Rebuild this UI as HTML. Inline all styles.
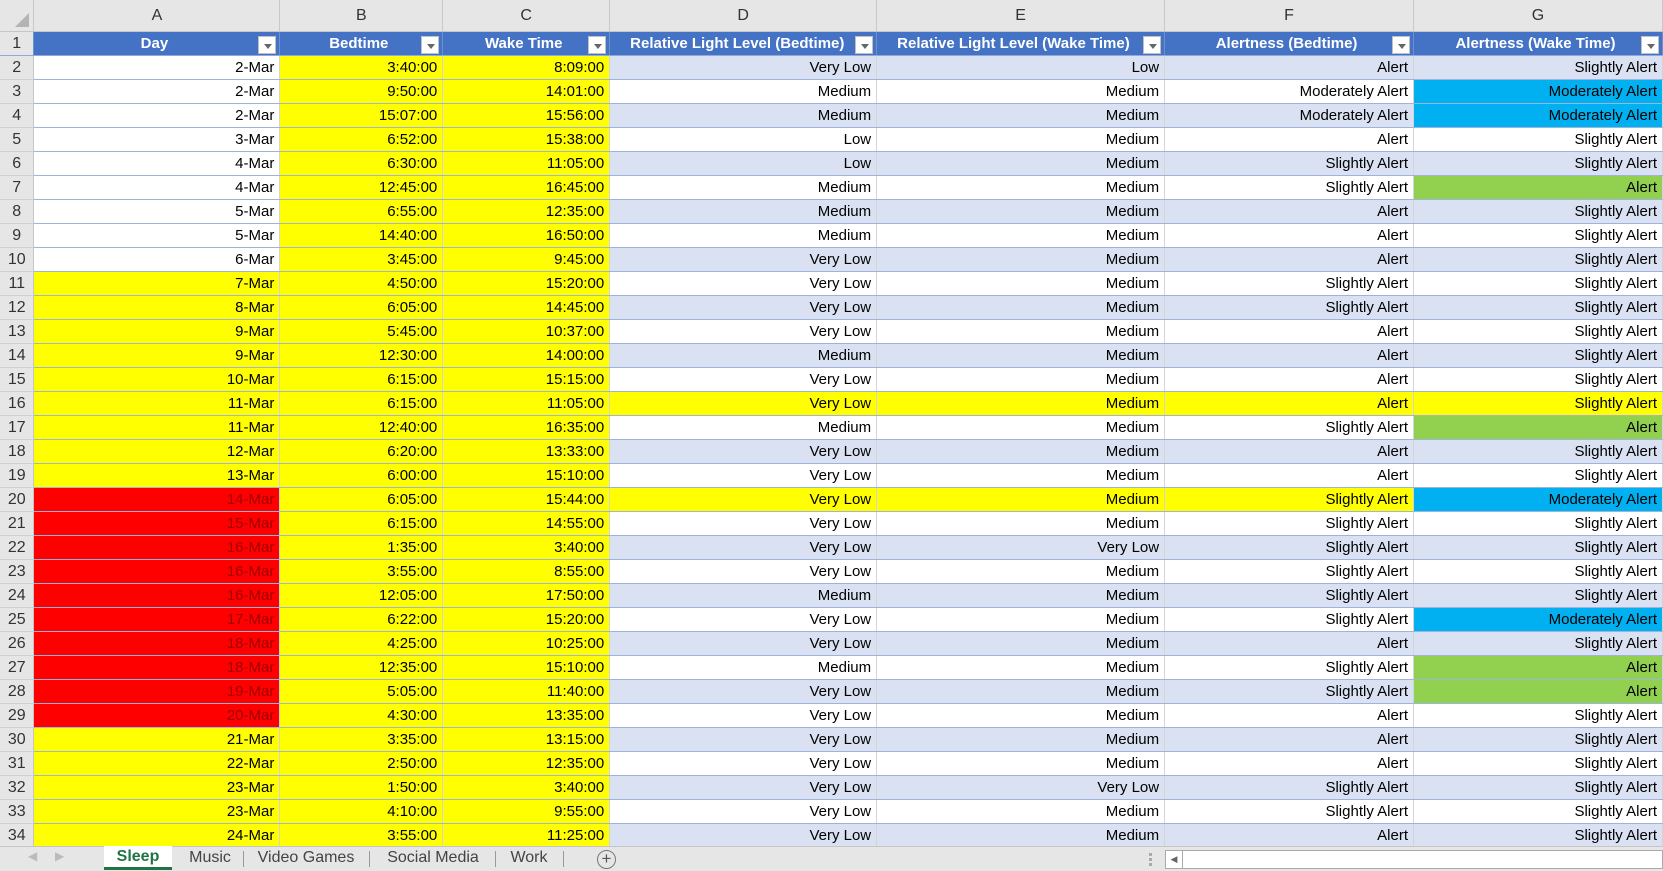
<!DOCTYPE html>
<html><head><meta charset="utf-8"><style>
*{margin:0;padding:0;box-sizing:border-box}
body{width:1663px;height:871px;overflow:hidden;background:#fff;font-family:"Liberation Sans",sans-serif;font-size:15px;color:#000;position:relative}
table{border-collapse:collapse;table-layout:fixed;position:absolute;left:0;top:0}
td{height:24px;padding:0 5px 0 0;text-align:right;white-space:nowrap;overflow:hidden;border-bottom:1px solid #9fb4d8;border-right:1px solid #d4d4d4;line-height:23px}
tr.ch td{height:31px;background:#e6e6e6;text-align:center;color:#333;font-size:16px;border-bottom:1px solid #c6c6c6;border-right:1px solid #c8c8c8;padding:0}
tr.h td{background:#4472c4;color:#fff;font-weight:bold;text-align:center;position:relative;border-right:1px solid #6f8fd0;border-bottom:1px solid #8ea9db}
tr.h td.rn{font-weight:normal}
td.rn{background:#e6e6e6!important;color:#333!important;text-align:center;padding:0;font-size:16px;border-right:1px solid #c6c6c6;border-bottom:1px solid #d0d0d0}
tr.b td{background:#d9e1f2}
td.y,tr.b td.y{background:#ffff00}
td.r,tr.b td.r{background:#ff0000;color:#a00000}
td.bl,tr.b td.bl{background:#00b0f0}
td.g,tr.b td.g{background:#92d050}
td.w,tr.b td.w{background:#fff}
.dd{position:absolute;right:3px;top:4px;width:18px;height:18px;background:#fff;border:1px solid #c0c0c0}
.dd:after{content:"";position:absolute;left:5px;top:7px;border-left:4px solid transparent;border-right:4px solid transparent;border-top:5px solid #666}
.bar{position:absolute;left:0;top:846px;width:1663px;height:25px;background:#e6e6e6;border-top:1px solid #c6c6c6;font-size:16px;color:#444}
.tab{position:absolute;top:0;height:24px;line-height:22px;text-align:center}
.sep{position:absolute;top:4px;width:1px;height:16px;background:#999}
</style></head><body>
<table>
<colgroup><col style="width:34px"><col style="width:246px"><col style="width:163px"><col style="width:167px"><col style="width:267px"><col style="width:288px"><col style="width:249px"><col style="width:249px"></colgroup>
<tr class="ch" style="height:31px"><td style="position:relative"><div style="position:absolute;right:4px;bottom:4px;border-left:14px solid transparent;border-bottom:14px solid #b4b4b4;width:0;height:0"></div></td><td>A</td><td>B</td><td>C</td><td>D</td><td>E</td><td>F</td><td>G</td></tr>
<tr class="h"><td class="rn">1</td><td>Day<span class="dd"></span></td><td>Bedtime<span class="dd"></span></td><td>Wake Time<span class="dd"></span></td><td style="text-align:left;padding-left:20px">Relative Light Level (Bedtime)<span class="dd"></span></td><td style="text-align:left;padding-left:20px">Relative Light Level (Wake Time)<span class="dd"></span></td><td>Alertness (Bedtime)<span class="dd"></span></td><td>Alertness (Wake Time)<span class="dd"></span></td></tr>
<tr class="b"><td class="rn">2</td><td class="w">2-Mar</td><td class="y">3:40:00</td><td class="y">8:09:00</td><td>Very Low</td><td>Low</td><td>Alert</td><td>Slightly Alert</td></tr>
<tr><td class="rn">3</td><td class="w">2-Mar</td><td class="y">9:50:00</td><td class="y">14:01:00</td><td>Medium</td><td>Medium</td><td>Moderately Alert</td><td class="bl">Moderately Alert</td></tr>
<tr class="b"><td class="rn">4</td><td class="w">2-Mar</td><td class="y">15:07:00</td><td class="y">15:56:00</td><td>Medium</td><td>Medium</td><td>Moderately Alert</td><td class="bl">Moderately Alert</td></tr>
<tr><td class="rn">5</td><td class="w">3-Mar</td><td class="y">6:52:00</td><td class="y">15:38:00</td><td>Low</td><td>Medium</td><td>Alert</td><td>Slightly Alert</td></tr>
<tr class="b"><td class="rn">6</td><td class="w">4-Mar</td><td class="y">6:30:00</td><td class="y">11:05:00</td><td>Low</td><td>Medium</td><td>Slightly Alert</td><td>Slightly Alert</td></tr>
<tr><td class="rn">7</td><td class="w">4-Mar</td><td class="y">12:45:00</td><td class="y">16:45:00</td><td>Medium</td><td>Medium</td><td>Slightly Alert</td><td class="g">Alert</td></tr>
<tr class="b"><td class="rn">8</td><td class="w">5-Mar</td><td class="y">6:55:00</td><td class="y">12:35:00</td><td>Medium</td><td>Medium</td><td>Alert</td><td>Slightly Alert</td></tr>
<tr><td class="rn">9</td><td class="w">5-Mar</td><td class="y">14:40:00</td><td class="y">16:50:00</td><td>Medium</td><td>Medium</td><td>Alert</td><td>Slightly Alert</td></tr>
<tr class="b"><td class="rn">10</td><td class="w">6-Mar</td><td class="y">3:45:00</td><td class="y">9:45:00</td><td>Very Low</td><td>Medium</td><td>Alert</td><td>Slightly Alert</td></tr>
<tr><td class="rn">11</td><td class="y">7-Mar</td><td class="y">4:50:00</td><td class="y">15:20:00</td><td>Very Low</td><td>Medium</td><td>Slightly Alert</td><td>Slightly Alert</td></tr>
<tr class="b"><td class="rn">12</td><td class="y">8-Mar</td><td class="y">6:05:00</td><td class="y">14:45:00</td><td>Very Low</td><td>Medium</td><td>Slightly Alert</td><td>Slightly Alert</td></tr>
<tr><td class="rn">13</td><td class="y">9-Mar</td><td class="y">5:45:00</td><td class="y">10:37:00</td><td>Very Low</td><td>Medium</td><td>Alert</td><td>Slightly Alert</td></tr>
<tr class="b"><td class="rn">14</td><td class="y">9-Mar</td><td class="y">12:30:00</td><td class="y">14:00:00</td><td>Medium</td><td>Medium</td><td>Alert</td><td>Slightly Alert</td></tr>
<tr><td class="rn">15</td><td class="y">10-Mar</td><td class="y">6:15:00</td><td class="y">15:15:00</td><td>Very Low</td><td>Medium</td><td>Alert</td><td>Slightly Alert</td></tr>
<tr class="b"><td class="rn">16</td><td class="y">11-Mar</td><td class="y">6:15:00</td><td class="y">11:05:00</td><td class="y">Very Low</td><td class="y">Medium</td><td class="y">Alert</td><td class="y">Slightly Alert</td></tr>
<tr><td class="rn">17</td><td class="y">11-Mar</td><td class="y">12:40:00</td><td class="y">16:35:00</td><td>Medium</td><td>Medium</td><td>Slightly Alert</td><td class="g">Alert</td></tr>
<tr class="b"><td class="rn">18</td><td class="y">12-Mar</td><td class="y">6:20:00</td><td class="y">13:33:00</td><td>Very Low</td><td>Medium</td><td>Alert</td><td>Slightly Alert</td></tr>
<tr><td class="rn">19</td><td class="y">13-Mar</td><td class="y">6:00:00</td><td class="y">15:10:00</td><td>Very Low</td><td>Medium</td><td>Alert</td><td>Slightly Alert</td></tr>
<tr class="b"><td class="rn">20</td><td class="r">14-Mar</td><td class="y">6:05:00</td><td class="y">15:44:00</td><td class="y">Very Low</td><td class="y">Medium</td><td class="y">Slightly Alert</td><td class="bl">Moderately Alert</td></tr>
<tr><td class="rn">21</td><td class="r">15-Mar</td><td class="y">6:15:00</td><td class="y">14:55:00</td><td>Very Low</td><td>Medium</td><td>Slightly Alert</td><td>Slightly Alert</td></tr>
<tr class="b"><td class="rn">22</td><td class="r">16-Mar</td><td class="y">1:35:00</td><td class="y">3:40:00</td><td>Very Low</td><td>Very Low</td><td>Slightly Alert</td><td>Slightly Alert</td></tr>
<tr><td class="rn">23</td><td class="r">16-Mar</td><td class="y">3:55:00</td><td class="y">8:55:00</td><td>Very Low</td><td>Medium</td><td>Slightly Alert</td><td>Slightly Alert</td></tr>
<tr class="b"><td class="rn">24</td><td class="r">16-Mar</td><td class="y">12:05:00</td><td class="y">17:50:00</td><td>Medium</td><td>Medium</td><td>Slightly Alert</td><td>Slightly Alert</td></tr>
<tr><td class="rn">25</td><td class="r">17-Mar</td><td class="y">6:22:00</td><td class="y">15:20:00</td><td>Very Low</td><td>Medium</td><td>Slightly Alert</td><td class="bl">Moderately Alert</td></tr>
<tr class="b"><td class="rn">26</td><td class="r">18-Mar</td><td class="y">4:25:00</td><td class="y">10:25:00</td><td>Very Low</td><td>Medium</td><td>Alert</td><td>Slightly Alert</td></tr>
<tr><td class="rn">27</td><td class="r">18-Mar</td><td class="y">12:35:00</td><td class="y">15:10:00</td><td>Medium</td><td>Medium</td><td>Slightly Alert</td><td class="g">Alert</td></tr>
<tr class="b"><td class="rn">28</td><td class="r">19-Mar</td><td class="y">5:05:00</td><td class="y">11:40:00</td><td>Very Low</td><td>Medium</td><td>Slightly Alert</td><td class="g">Alert</td></tr>
<tr><td class="rn">29</td><td class="r">20-Mar</td><td class="y">4:30:00</td><td class="y">13:35:00</td><td>Very Low</td><td>Medium</td><td>Alert</td><td>Slightly Alert</td></tr>
<tr class="b"><td class="rn">30</td><td class="y">21-Mar</td><td class="y">3:35:00</td><td class="y">13:15:00</td><td>Very Low</td><td>Medium</td><td>Alert</td><td>Slightly Alert</td></tr>
<tr><td class="rn">31</td><td class="y">22-Mar</td><td class="y">2:50:00</td><td class="y">12:35:00</td><td>Very Low</td><td>Medium</td><td>Alert</td><td>Slightly Alert</td></tr>
<tr class="b"><td class="rn">32</td><td class="y">23-Mar</td><td class="y">1:50:00</td><td class="y">3:40:00</td><td>Very Low</td><td>Very Low</td><td>Slightly Alert</td><td>Slightly Alert</td></tr>
<tr><td class="rn">33</td><td class="y">23-Mar</td><td class="y">4:10:00</td><td class="y">9:55:00</td><td>Very Low</td><td>Medium</td><td>Slightly Alert</td><td>Slightly Alert</td></tr>
<tr class="b"><td class="rn">34</td><td class="y">24-Mar</td><td class="y">3:55:00</td><td class="y">11:25:00</td><td>Very Low</td><td>Medium</td><td>Alert</td><td>Slightly Alert</td></tr>
</table>
<div class="bar">
<span style="position:absolute;left:28px;top:2px;color:#bbb;font-size:12px">&#9664;</span>
<span style="position:absolute;left:55px;top:2px;color:#bbb;font-size:12px">&#9654;</span>
<div class="tab" style="left:104px;width:68px;background:#fff;color:#217346;font-weight:bold;border-bottom:3px solid #217346;top:-1px">Sleep</div>
<div class="tab" style="left:178px;width:64px">Music</div>
<div class="sep" style="left:243px"></div>
<div class="tab" style="left:246px;width:120px">Video Games</div>
<div class="sep" style="left:369px"></div>
<div class="tab" style="left:372px;width:122px">Social Media</div>
<div class="sep" style="left:495px"></div>
<div class="tab" style="left:497px;width:64px">Work</div>
<div class="sep" style="left:563px"></div>
<div style="position:absolute;left:597px;top:3px;width:19px;height:19px;border:1px solid #777;border-radius:50%;text-align:center;line-height:16px;font-size:17px;color:#555">+</div>
<div style="position:absolute;left:1149px;top:6px;width:3px;height:13px;border-left:3px dotted #aaa"></div>
<div style="position:absolute;left:1165px;top:3px;width:498px;height:19px;background:#fff;border:1px solid #aaa"><div style="position:absolute;left:0;top:0;width:17px;height:17px;border-right:1px solid #aaa;font-size:9px;color:#666;text-align:center;line-height:17px">&#9664;</div></div>
</div>
</body></html>
